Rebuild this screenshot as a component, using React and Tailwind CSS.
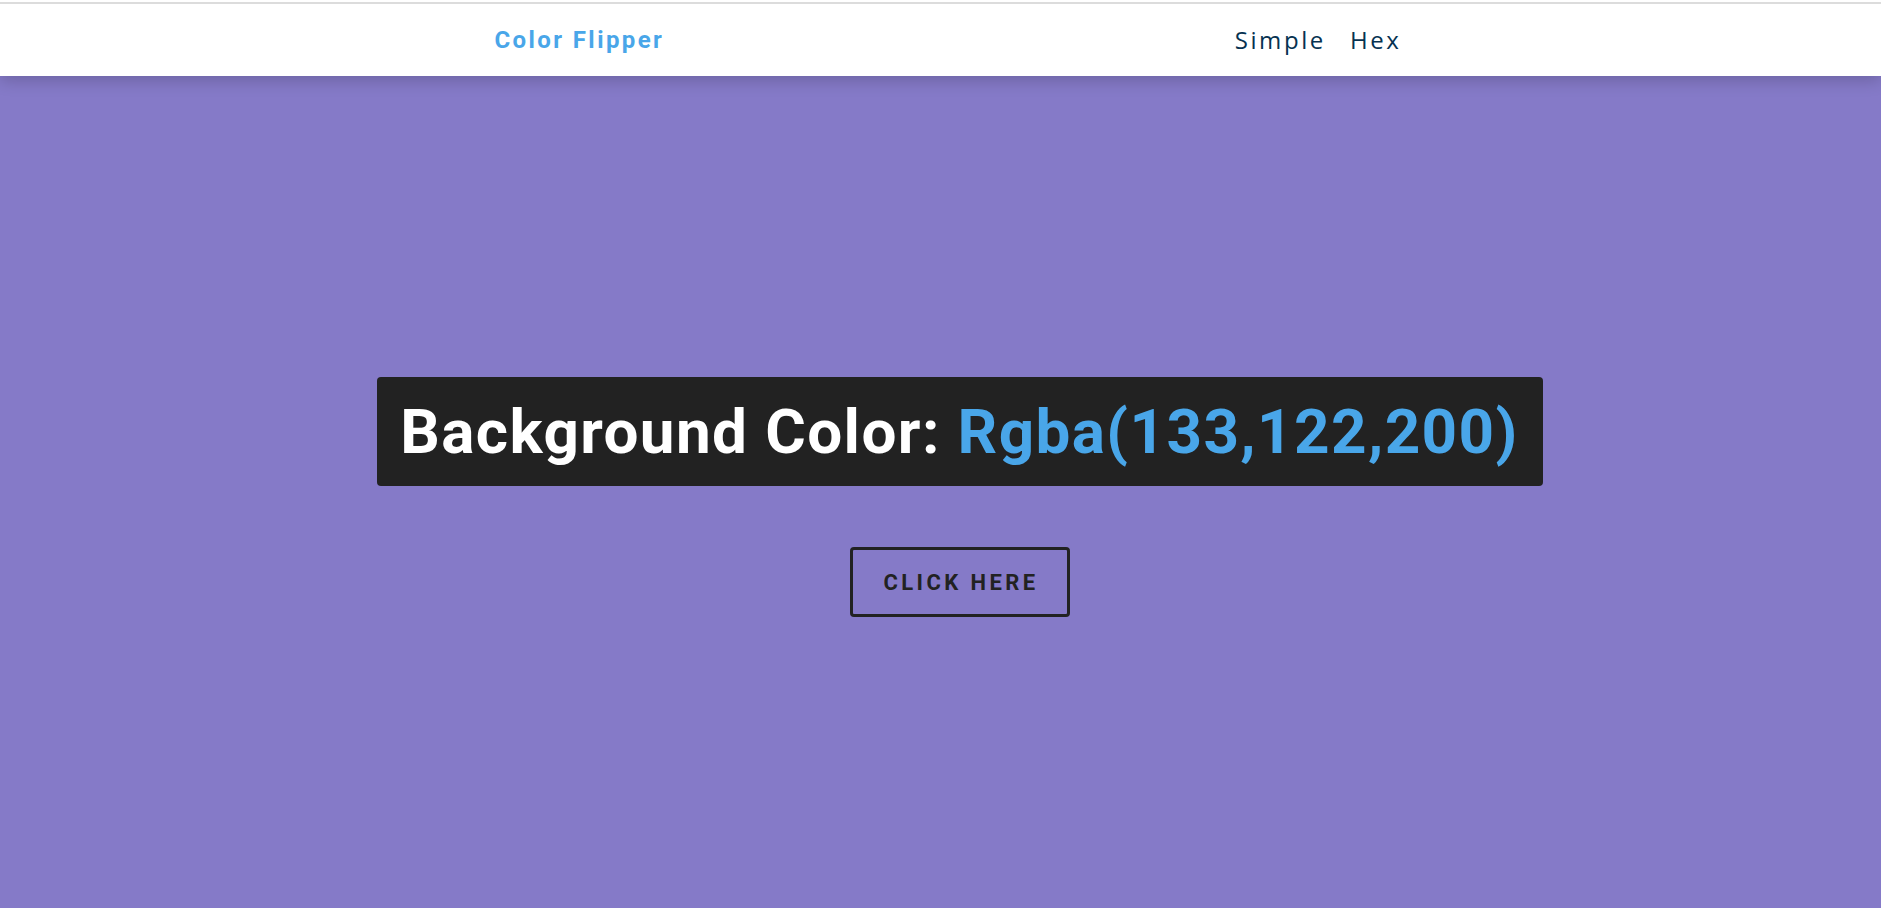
import React, { useState } from 'react'

const colors = [
    [133, 122, 200],
    [73, 166, 233],
    [242, 108, 79],
    [41, 128, 185],
]

const App = () => {
    const [index, setIndex] = useState(0)
    const [r, g, b] = colors[index]

    const handleClick = () => {
        setIndex((index + 1) % colors.length)
    }

    return (
        <div className="min-h-[908px] w-full overflow-hidden flex flex-col" style={{ backgroundColor: `rgb(${r},${g},${b})` }}>
            <nav className="relative z-10 bg-white pt-[2px] shadow-[0_5px_15px_rgba(0,0,0,0.18)]">
                <div className="h-[74px] border-t-2 border-[#dcdcdc]">
                    <div className="w-[918px] mx-auto h-full pl-[13px] flex items-center justify-between">
                        <h4 className="font-['Roboto'] font-bold text-[24px] tracking-[2.4px] text-[#49a6e9]">Color Flipper</h4>
                        <ul className="flex items-center gap-[24px] -mr-[2px] font-['Open_Sans'] text-[24px] tracking-[2.6px] text-[#063251]">
                            <li className="cursor-pointer">Simple</li>
                            <li className="cursor-pointer">Hex</li>
                        </ul>
                    </div>
                </div>
            </nav>
            <main className="flex-1 flex flex-col items-center pt-[301px] pl-[39px]">
                <div className="bg-[#222222] rounded-[4px] pt-[24px] pb-[23px] pl-[23px] pr-[24px]">
                    <h2 className="font-['Roboto'] font-bold text-[62px] leading-none tracking-[1.4px] text-white whitespace-nowrap">
                        Background Color: <span className="text-[#49a6e9]">Rgba({r},{g},{b})</span>
                    </h2>
                </div>
                <button onClick={handleClick}
                    className="mt-[61px] w-[220px] h-[70px] border-[3px] border-[#222222] rounded-[4px] bg-transparent font-['Roboto'] font-bold text-[22px] tracking-[3.4px] text-[#222222] uppercase flex items-center justify-center pl-[2px] cursor-pointer">
                    Click Here
                </button>
            </main>
        </div>
    )
}

export default App
